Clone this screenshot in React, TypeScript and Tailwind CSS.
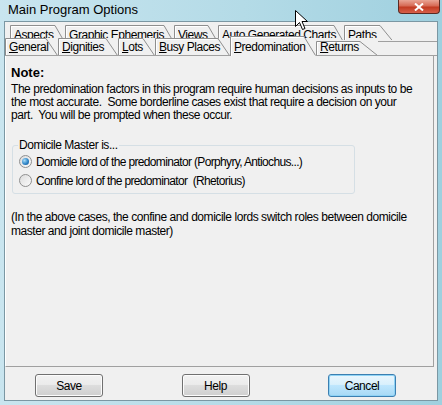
import React from "react";

const font = { fontFamily: '"Liberation Sans", Arial, sans-serif' };

type TabProps = {
  label: string;
  w: number;
  h: number;
  slant: number;
  selected?: boolean;
  bottomLine?: boolean;
  front?: boolean;
};

const Tab = ({ label, w, h, slant, selected, bottomLine, front }: TabProps) => {
  const first = label.charAt(0);
  const rest = label.slice(1);
  return (
    <div
      className={`relative shrink-0 flex flex-col ${front ? "justify-end pb-[2px]" : "justify-start pt-[3px]"} pl-[4px]`}
      style={{ width: w, height: h }}
    >
      <svg className="absolute inset-0" width={w} height={h}>
        <polygon
          points={`0,${h} 0,0 ${w - slant},0 ${w},${front ? h : h + 2} ${w},${h}`}
          fill="#f0f0f0"
        />
        <polyline
          points={`0.5,${h} 0.5,0.5 ${w - slant},0.5 ${w - 0.5},${front ? h - 0.5 : h + 2}`}
          fill="none"
          stroke="#8e8e8e"
          strokeWidth="1"
        />
        <line x1="1.5" y1={h} x2="1.5" y2="1.5" stroke="#ffffff" />
        <line x1="1.5" y1="1.5" x2={w - slant - 1} y2="1.5" stroke="#ffffff" />
        {bottomLine && !selected && (
          <line x1="0" y1={h - 0.5} x2={w} y2={h - 0.5} stroke="#a0a0a0" />
        )}
      </svg>
      {front ? (
        <span className="relative text-[12px] leading-[14px] text-black whitespace-nowrap">
          <span className="underline underline-offset-[1px]">{first}</span>
          {rest}
        </span>
      ) : (
        <span className="relative block h-[10px] overflow-hidden text-[12px] leading-[14px] text-black whitespace-nowrap">
          {label}
        </span>
      )}
    </div>
  );
};

const Radio = ({ checked, label }: { checked?: boolean; label: string }) => (
  <div className="flex items-center h-[19px]">
    <span className="w-[13px] h-[13px] rounded-full border border-[#8f8f8f] bg-gradient-to-br from-[#dcdcdc] to-[#fbfbfb] flex items-center justify-center ml-[6px]">
      {checked && (
        <span className="w-[7px] h-[7px] rounded-full bg-[radial-gradient(circle_at_35%_35%,#a9dcf7_0%,#2f86c8_55%,#154f8c_100%)]" />
      )}
    </span>
    <span className="ml-[4px] text-[12px] leading-[14px] whitespace-pre tracking-[-0.65px]">{label}</span>
  </div>
);

const Button = ({ label, primary }: { label: string; primary?: boolean }) => (
  <div
    className={`w-[68px] h-[23px] rounded-[3px] border flex items-center justify-center text-[12px] ${
      primary
        ? "border-[#3c7fb1] bg-[linear-gradient(#eaf6fd_0%,#d9f0fc_45%,#bee6fd_50%,#a7d9f5_100%)] shadow-[inset_0_0_0_1px_#8fd3f5]"
        : "border-[#707070] bg-[linear-gradient(#f2f2f2_0%,#ebebeb_45%,#dddddd_50%,#cfcfcf_100%)] shadow-[inset_0_0_0_1px_#fcfcfc]"
    }`}
  >
    {label}
  </div>
);

export default function App() {
  return (
    <div
      className="relative w-[442px] h-[405px] overflow-hidden flex flex-col bg-[linear-gradient(90deg,#c9e5ef_0%,#b4dbe7_55%,#9fd0df_100%)] text-black tracking-[-0.45px]"
      style={font}
    >
      {/* title bar */}
      <div className="h-[21px] flex items-start shrink-0">
        <span className="ml-[8px] mt-[2px] text-[13px] leading-[15px] text-black tracking-normal">
          Main Program Options
        </span>
        <div className="ml-auto mr-[2px] w-[42px] h-[14px] rounded-b-[4px] border border-t-0 border-[#5a2a22] bg-[linear-gradient(#e9a595_0%,#d66a55_45%,#c23b22_55%,#d7604a_100%)] flex items-center justify-center">
          <svg width="10" height="8" viewBox="0 0 10 8">
            <path d="M1 0.5 L9 7.5 M9 0.5 L1 7.5" stroke="#ffffff" strokeWidth="2" />
          </svg>
        </div>
      </div>

      {/* client */}
      <div className="ml-[4px] mr-[4px] flex-1 border border-[#7b97a3] bg-[#f0f0f0] flex flex-col">
        {/* tabs */}
        <div className="h-[34px] shrink-0 flex flex-col">
          <div className="flex h-[15px] mt-[3px] ml-[5px]">
            <Tab label="Aspects" w={55} h={15} slant={10} />
            <Tab label="Graphic Ephemeris" w={109} h={15} slant={10} />
            <Tab label="Views" w={44} h={15} slant={10} />
            <Tab label="Auto Generated Charts" w={126} h={15} slant={10} />
            <Tab label="Paths" w={50} h={15} slant={14} />
          </div>
          <div className="flex items-end h-[20px] -mt-[4px]">
            <Tab label="General" w={53} h={18} slant={12} front bottomLine />
            <Tab label="Dignities" w={60} h={18} slant={12} front bottomLine />
            <Tab label="Lots" w={37} h={18} slant={12} front bottomLine />
            <Tab label="Busy Places" w={75} h={18} slant={12} front bottomLine />
            <Tab label="Predomination" w={86} h={20} slant={12} front selected />
            <Tab label="Returns" w={62} h={15} slant={18} front bottomLine />
            <div className="flex-1 h-[15px] border-t border-[#a0a0a0] border-b" />
          </div>
        </div>

        {/* page */}
        <div className="h-[311px] mr-[3px] border-l border-l-white border-r border-b border-r-[#a0a0a0] border-b-[#a0a0a0] pl-[5px] pt-[10px] text-[12px]">
          <div className="font-bold leading-[14px] text-[13px] tracking-normal">Note:</div>
          <p className="mt-[3px] leading-[13px] whitespace-nowrap">
            The predomination factors in this program require human decisions as inputs to be
            <br />
            the most accurate.&nbsp; Some borderline cases exist that require a decision on your
            <br />
            part.&nbsp; You will be prompted when these occur.
          </p>

          <fieldset className="mt-[16px] ml-[1px] w-[343px] h-[56px] border border-[#d5dfe5] rounded-[3px] pl-[0px] pt-[0px]">
            <legend className="ml-[5px] px-[1px] text-[12px] leading-[14px]">Domicile Master is...</legend>
            <Radio checked label="Domicile lord of the predominator (Porphyry, Antiochus...)" />
            <Radio label="Confine lord of the predominator  (Rhetorius)" />
          </fieldset>

          <p className="mt-[16px] leading-[14px] whitespace-nowrap">
            (In the above cases, the confine and domicile lords switch roles between domicile
            <br />
            master and joint domicile master)
          </p>
        </div>

        {/* buttons */}
        <div className="flex-1 flex items-start justify-between pt-[7px] pl-[30px] pr-[41px] text-[12px]">
          <Button label="Save" />
          <Button label="Help" />
          <Button label="Cancel" primary />
        </div>
      </div>
      <div className="h-[4px] shrink-0" />

      {/* mouse pointer */}
      <svg className="absolute left-[295px] top-[10px]" width="14" height="22" viewBox="0 0 14 22">
        <path
          d="M0.5 0.5 L0.5 16.5 L4.5 12.5 L7.5 19.5 L10 18.5 L7 11.5 L12.5 11.5 Z"
          fill="#ffffff"
          stroke="#000000"
          strokeWidth="1"
        />
      </svg>
    </div>
  );
}
